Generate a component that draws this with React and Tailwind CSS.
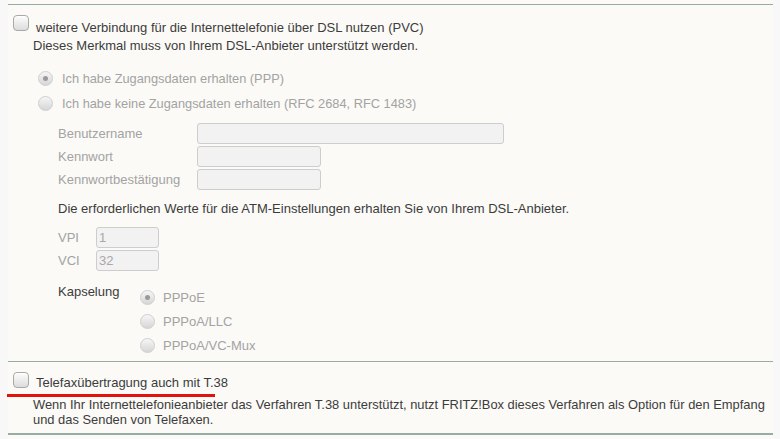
import React from "react";

const font = { fontFamily: '"Liberation Sans", Arial, sans-serif' };

function Checkbox() {
  return (
    <div className="w-[16px] h-[16px] shrink-0 rounded-[4px] border border-[#a9a9a9] bg-gradient-to-b from-[#fdfdfd] to-[#dcdcdc] shadow-[inset_0_1px_0_#fff]" />
  );
}

function Radio({ checked }) {
  return (
    <div className="w-[15px] h-[15px] shrink-0 rounded-full border border-[#cfcfcf] bg-gradient-to-b from-[#f6f6f6] to-[#d6d6d6] flex items-center justify-center">
      {checked && <div className="w-[5px] h-[5px] rounded-full bg-[#9a9a9a]" />}
    </div>
  );
}

function Input({ w, value }) {
  return (
    <div
      className={`h-[21px] rounded-[3px] border border-[#cdcdcd] bg-[#f2f2f2] text-[#a8a8a8] text-[13px] leading-[19px] pl-[2px] ${w}`}
    >
      {value}
    </div>
  );
}

export default function App() {
  return (
    <div
      className="w-[780px] h-[439px] bg-[#f8f8f8] flex overflow-hidden text-[13px]"
      style={font}
    >
      <div className="ml-[8px] w-[765px] h-full bg-[#fbfaf6] pt-[4px]">
        {/* Section 1 */}
        <div className="border-t border-[#97aca6]">
          <div className="flex pt-[10px] pl-[5px]">
            <Checkbox />
            <span className="ml-[7px] mt-[4px] leading-[18px] text-[#3c3c3c]">
              weitere Verbindung für die Internettelefonie über DSL nutzen (PVC)
            </span>
          </div>
          <div className="pl-[25px] leading-[18px] text-[#3c3c3c]">
            Dieses Merkmal muss von Ihrem DSL-Anbieter unterstützt werden.
          </div>

          <div className="pl-[30px] mt-[11px] text-[#a3a3a3] text-[12.8px]">
            <div className="h-[25px] flex items-center gap-[9px]">
              <Radio checked />
              <span>Ich habe Zugangsdaten erhalten (PPP)</span>
            </div>
            <div className="h-[25px] flex items-center gap-[9px]">
              <Radio />
              <span>Ich habe keine Zugangsdaten erhalten (RFC 2684, RFC 1483)</span>
            </div>
          </div>

          <div className="pl-[50px] mt-[7px] flex flex-col gap-[2px] text-[#a3a3a3]">
            <div className="flex items-center h-[21px]">
              <span className="w-[139px]">Benutzername</span>
              <Input w="w-[307px]" />
            </div>
            <div className="flex items-center h-[21px]">
              <span className="w-[139px]">Kennwort</span>
              <Input w="w-[124px]" />
            </div>
            <div className="flex items-center h-[21px]">
              <span className="w-[139px]">Kennwortbestätigung</span>
              <Input w="w-[124px]" />
            </div>
          </div>

          <div className="pl-[50px] mt-[10px] leading-[18px] text-[#3c3c3c]">
            Die erforderlichen Werte für die ATM-Einstellungen erhalten Sie von Ihrem DSL-Anbieter.
          </div>

          <div className="pl-[50px] mt-[9px] flex flex-col gap-[2px] text-[#a3a3a3]">
            <div className="flex items-center h-[21px]">
              <span className="w-[38px]">VPI</span>
              <Input w="w-[63px]" value="1" />
            </div>
            <div className="flex items-center h-[21px]">
              <span className="w-[38px]">VCI</span>
              <Input w="w-[63px]" value="32" />
            </div>
          </div>

          <div className="pl-[50px] mt-[14px] flex">
            <span className="w-[82px] leading-[14px] text-[#3c3c3c]">Kapselung</span>
            <div className="flex flex-col text-[#a3a3a3]">
              <div className="h-[24px] flex items-center gap-[8px]">
                <Radio checked />
                <span className="mt-[2px]">PPPoE</span>
              </div>
              <div className="h-[24px] flex items-center gap-[8px]">
                <Radio />
                <span className="mt-[2px]">PPPoA/LLC</span>
              </div>
              <div className="h-[24px] flex items-center gap-[8px]">
                <Radio />
                <span className="mt-[2px]">PPPoA/VC-Mux</span>
              </div>
            </div>
          </div>
          <div className="mt-[4px]" />
        </div>

        {/* Section 2 */}
        <div className="border-t border-[#97aca6] border-b-2 border-b-[#97aca6] pb-[6px]">
          <div className="relative flex pt-[10px] pl-[5px] pb-[5px]">
            <Checkbox />
            <span className="ml-[7px] mt-[2px] leading-[18px] text-[#3c3c3c]">
              Telefaxübertragung auch mit T.38
            </span>
            <div className="absolute left-[-1px] top-[32px] w-[208px] h-[3px] bg-[#e0140c]" />
          </div>
          <div className="pl-[25px] leading-[15px] text-[#3c3c3c] text-[12.9px]">
            Wenn Ihr Internettelefonieanbieter das Verfahren T.38 unterstützt, nutzt FRITZ!Box dieses Verfahren als Option für den Empfang
            <br />
            und das Senden von Telefaxen.
          </div>
        </div>
      </div>
    </div>
  );
}
